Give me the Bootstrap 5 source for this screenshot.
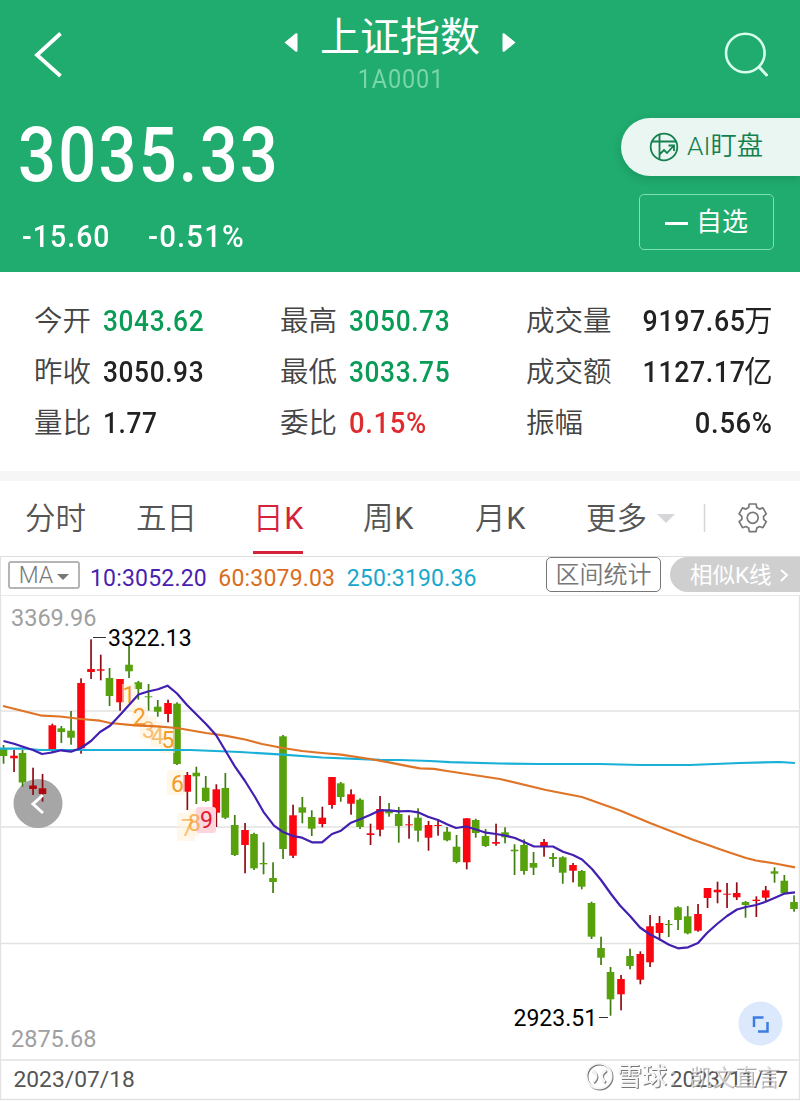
<!DOCTYPE html>
<html lang="zh-CN">
<head>
<meta charset="utf-8">
<meta name="viewport" content="width=device-width, initial-scale=1">
<title>上证指数</title>
<link rel="stylesheet" href="https://cdn.jsdelivr.net/npm/bootstrap@5.3.0/dist/css/bootstrap.min.css">
<style>
body{font-family:Roboto,"Noto Sans CJK SC",sans-serif;background:#fff;color:#222;width:800px;overflow-x:hidden}
.hd{background:#20ab6f;height:272px}
.hd-top{height:100px}
.hd-side{width:120px}
.title-cn{font-size:40px;line-height:48px;font-weight:400;padding-top:14px}
.title-cn svg{position:relative;top:4px}
.code{font-size:25px;line-height:28px;color:#79d6aa;letter-spacing:.9px;margin:4px 0 0 2px;transform:scaleX(.94)}
.price{font-size:76px;line-height:80px;font-weight:500;letter-spacing:2.5px;margin:15px 0 0 18px;transform:scaleX(.88);transform-origin:left}
.chg{font-size:31px;line-height:36px;font-weight:500;margin:24px 0 0 22px}
.chg span{letter-spacing:1.2px;transform:scaleX(.915);transform-origin:left}
.chg .pct{transform:scaleX(.95)}
.pill-ai{width:179px;height:58px;margin-top:18px;background:#e9f6f1;color:#15804f;border-radius:29px 0 0 29px;font-size:26.3px;font-weight:350;box-shadow:0 3px 8px rgba(0,80,40,.22);padding-left:28px}
.btn-fav{width:135px;height:56px;margin:18px 26px 0 0;border:1.5px solid #7fe0b4;border-radius:5px;font-size:26px;line-height:1}
.dash{width:23px;height:3px;background:#fff;margin-top:3px}
.stats{height:199px;padding:24px 28px 0 34px}
.stats .line{height:51px;line-height:51px;font-size:28.5px}
.cell{width:246px}
.lab{font-weight:350;color:#444}
.num{display:inline-block;font-size:29.5px;font-weight:500;letter-spacing:.7px;margin-left:11.500px;transform:scaleX(.89);transform-origin:left}
.wide{transform:scaleX(.93)}
.justify-content-between>.num{transform-origin:right;margin-right:-.5px}
.justify-content-between>.num:not(.wide){transform:scaleX(.905)}
.unit{display:inline-block;font-weight:400;letter-spacing:0;transform:scaleX(1.06);transform-origin:right}
.up{color:#e02b2e}.down{color:#089c56}
.gap-bar{height:10px;background:#f6f6f6}
.tabs{height:75px;font-size:30.5px;color:#555;font-weight:350;line-height:80px;white-space:nowrap}
.tabs>*{flex:none}
.tabs .k{font-weight:400;letter-spacing:.5px;margin-left:.7px}
.tabs .on{color:#d3243c;position:relative;width:50px}
.tabs .on::after{content:"";position:absolute;left:0;right:0;bottom:5px;height:3px;background:#d3243c}
.ma{height:39px;border-top:1px solid #dedede;border-left:1px solid #e2e2e2;font-size:23px;line-height:39px}
.ma>span{letter-spacing:.18px}
.ma-btn{width:72px;height:28px;border:2px solid #b5b5b5;border-radius:3px;color:#777;margin:4px 0 0 7px;font-size:23px;font-weight:350;line-height:26px}
.range{width:115px;height:35px;border:1.5px solid #777;border-radius:5px;color:#777;font-size:24px;font-weight:350;line-height:34px}
.sim{width:130px;height:35px;background:#cfcfcf;border-radius:18px 0 0 18px;color:#fff;font-size:22.5px;line-height:34px;margin:0 0 0 9px;padding-left:20px}
.chart{height:506px}
svg text{font-family:Roboto,"Noto Sans CJK SC",sans-serif}
</style>
</head>
<body>
<header class="hd text-white">
  <div class="hd-top d-flex justify-content-between">
    <div class="hd-side"><svg width="80" height="100" fill="none" stroke="#fff" stroke-width="3.800"><path d="M60.500 33.500L37 55L60.500 76"/></svg></div>
    <div class="text-center">
      <div class="title-cn d-flex align-items-center">
        <svg width="16" height="22" style="margin-right:21px"><path d="M1.500 11.500L12.500 2.500Q14.500 1.500 14.500 3.500V19.500Q14.500 21.500 12.500 20.500Z" fill="#fff"/></svg>
        <span>上证指数</span>
        <svg width="16" height="22" style="margin-left:21px"><path d="M14.500 11.500L3.500 2.500Q1.500 1.500 1.500 3.500V19.500Q1.500 21.500 3.500 20.500Z" fill="#fff"/></svg>
      </div>
      <div class="code">1A0001</div>
    </div>
    <div class="hd-side"><svg width="120" height="100" fill="none" stroke="#d8ffec" stroke-width="2.600" stroke-linecap="round"><circle cx="65.300" cy="53" r="19.300"/><path d="M80 68L86.500 75" stroke-width="3"/></svg></div>
  </div>
  <div class="d-flex justify-content-between">
    <div>
      <div class="price">3035.33</div>
      <div class="chg d-flex"><span style="width:126px">-15.60</span><span class="pct">-0.51%</span></div>
    </div>
    <div class="d-flex flex-column align-items-end">
      <div class="pill-ai d-flex align-items-center"><svg width="30" height="30" class="me-2" fill="none" stroke="#15804f" stroke-width="1.800"><circle cx="15" cy="15" r="13.300"/><path d="M10.500 2.500V27.500M2.500 9.500H27.500M10.500 22.500L15 18L18 21L24.500 14M19.500 13.500H25V19"/></svg><span>AI盯盘</span></div>
      <div class="btn-fav d-flex align-items-center justify-content-center"><span class="dash me-2"></span><span>自选</span></div>
    </div>
  </div>
</header>

<section class="stats">
  <div class="line d-flex"><div class="cell"><span class="lab">今开</span><span class="num down">3043.62</span></div><div class="cell"><span class="lab">最高</span><span class="num down">3050.73</span></div><div class="cell d-flex justify-content-between"><span class="lab">成交量</span><span class="num">9197.65<span class="unit">万</span></span></div></div>
  <div class="line d-flex"><div class="cell"><span class="lab">昨收</span><span class="num">3050.93</span></div><div class="cell"><span class="lab">最低</span><span class="num down">3033.75</span></div><div class="cell d-flex justify-content-between"><span class="lab">成交额</span><span class="num">1127.17<span class="unit">亿</span></span></div></div>
  <div class="line d-flex"><div class="cell"><span class="lab">量比</span><span class="num">1.77</span></div><div class="cell"><span class="lab">委比</span><span class="num wide up">0.15%</span></div><div class="cell d-flex justify-content-between"><span class="lab">振幅</span><span class="num wide">0.56%</span></div></div>
</section>
<div class="gap-bar"></div>

<nav class="tabs d-flex align-items-center">
  <span style="margin-left:25px;width:111px">分时</span>
  <span style="width:117px">五日</span>
  <span class="on">日<span class="k">K</span></span>
  <span style="margin-left:60px;width:112px">周<span class="k">K</span></span>
  <span style="width:111px">月<span class="k">K</span></span>
  <span style="width:62px">更多</span>
  <svg width="150" height="75"><path d="M9 33H27L18 42Z" fill="#d5d6d9"/><path d="M56.500 23V51" stroke="#d5d5d5" stroke-width="1.500"/><g fill="none" stroke="#777" stroke-width="1.700" stroke-linejoin="round"><path id="gearPath"/><circle cx="104.700" cy="36.800" r="5.500"/></g></svg>
</nav>

<div class="ma d-flex">
  <div class="ma-btn text-center">MA<svg width="12" height="8" class="ms-1"><path d="M0 1H12L6 7Z" fill="#777"/></svg></div>
  <span style="color:#4a1fae;margin:2px 11.500px 0 10px">10:3052.20</span>
  <span style="color:#d96d20;margin:2px 11.500px 0 0">60:3079.03</span>
  <span style="color:#18a8cc;margin-top:2px">250:3190.36</span>
  <div class="range text-center ms-auto">区间统计</div>
  <div class="sim d-flex align-items-center">相似K线<svg width="12" height="16" class="ms-2" fill="none" stroke="#fff" stroke-width="2"><path d="M1 3L7 8L1 14"/></svg></div>
</div>

<svg class="chart d-block" width="800" height="506" viewBox="0 595 800 506" id="chart">
  <path d="M0 595H799.500M.5 595V1099.500H799.500V595M0 711H799M0 827H799M0 943.500H799M0 1060H799" fill="none" stroke="#e2e2e2" stroke-width="1.300"/>
  <circle cx="38" cy="803.500" r="24.500" fill="#a6a6a6"/>
  <g id="candles"></g>
  <path d="M43 795L33 804L43 813" fill="none" stroke="#fff" stroke-width="3"/>
  <g font-size="23">
    <g fill="#fff0d8" fill-opacity=".55"><rect x="122" y="684" width="14" height="22"/><rect x="132" y="706" width="16" height="21"/><rect x="140" y="716" width="16" height="23"/><rect x="150" y="722" width="12" height="25"/><rect x="160" y="729" width="15" height="24"/><rect x="167" y="770" width="18" height="25"/><rect x="177" y="813" width="18" height="28"/><rect x="188" y="809" width="12" height="27"/></g>
    <rect x="196" y="807" width="20" height="26" rx="3" fill="#fcd6dc"/>
    <g fill="#f29b26"><text x="122.500" y="703">1</text><text x="133" y="725">2</text><text x="142" y="738" fill-opacity=".6">3</text><text x="151" y="744" fill-opacity=".6">4</text><text x="161.500" y="748">5</text><text x="171" y="792">6</text><text x="181" y="836" fill-opacity=".6">7</text><text x="188" y="831" fill-opacity=".7">8</text></g>
    <text x="200" y="828" fill="#e31b35">9</text>
  </g>
  <g fill="none" stroke-width="2.200" stroke-linejoin="round">
    <polyline stroke="#19b0d8" points="0,748.700 23,748.500 40,750 190,750 240,752 283,754.700 322,757.500 380,759.800 400,760 430,761 450,762.200 500,763.500 540,764 600,764 640,765 690,765 740,763 780,762 795,763"/>
    <polyline stroke="#df7427" points="3,706 42,715.700 60,716.500 81,719 100,720.700 110,723 135,725.300 157,726.300 177,728 206,733 225,735.700 245,739.500 262,744 283,748 302,751 322,753 341,754.700 370,759 389,762.300 409,766.300 420,768.300 434,768.800 447,771 500,779 546,790 582,797 620,810.500 650,823 693,839.700 708,845 722,850 737,855 746,858 756,860.500 775,863.500 795,867.300"/>
    <polyline stroke="#421fb0" points="3.500,741 14,743.700 23,746.700 33,750 42,754 52,752.500 61,750.300 71,751.700 81,748 91,741 100,732 110,725.700 120,715 129,705 138.500,694.500 148,691.500 158,689.300 167.500,685.700 177,693.500 187,705 196,714 206,724 216,735 225,750 235,766.700 245,781 255,797 264,812.700 274,825.700 283,832 293,836 302,837.700 312,842.300 322,842.300 332,834 341,830.700 351,822.700 360,819.300 370,815 380,810.300 389,810.300 399,811.300 409,811 418,812.300 428,816.700 438,820 447,824.300 456,828 466,826.500 476,829.500 486,832.700 496,834 505,835.500 515,838 524,842 534,846.500 553,846.500 563,851.700 573,855 582,859.500 592,869 601,880 611,894 620,905.500 630,916 640,927.500 650,934.500 659,939 669,944.700 678,948.300 688,947.300 698,943 707,933 717,924 727,916 737,909.500 746,907 756,905 765,902 775,897.700 784,893.700 795,892.300"/>
  </g>
  <path d="M93 637.500H106M599 1017.500H608" stroke="#333" stroke-width="1.200"/>
  <g font-size="23">
    <text x="108" y="646" fill="#000">3322.13</text><text x="513.500" y="1026" fill="#000">2923.51</text>
    <text x="11" y="626" fill="#a0a0a0" font-size="23.500">3369.96</text><text x="11" y="1047" fill="#a0a0a0" font-size="23.500">2875.68</text>
    <text x="13.500" y="1087" fill="#555" font-size="22.800">2023/07/18</text><text x="670" y="1087" fill="#555" font-size="22.200">2023/11/17</text>
  </g>
  <circle cx="760.500" cy="1023.500" r="22" fill="#dce8fb"/>
  <path d="M754 1027V1017.500H763.500M767.500 1022V1031.500H758" fill="none" stroke="#3d7de0" stroke-width="2.500"/>
  <g style="filter:drop-shadow(1px 1px .5px #777)">
    <circle cx="599" cy="1076" r="12.500" fill="none" stroke="#f7f7f7" stroke-width="2"/>
    <path d="M592 1070Q600 1076 593 1082M606 1070Q598 1076 605 1082" stroke="#f7f7f7" stroke-width="2.400" fill="none"/>
    <text x="617" y="1085" font-size="25" fill="#f7f7f7" font-weight="500">雪球</text>
    <text x="667" y="1085" font-size="22.500" fill="#f7f7f7" fill-opacity=".65">：凯文直言</text>
  </g>
</svg>

<script>
// Each candle: centre x, direction (g falls, r rises), body top, body bottom, high, low
const candles=[
[3.5,'g',748.7,756,745,763.7],[14,'r',755.7,758.3,750,772],[22.5,'g',753,782.5,750,786.7],[33,'r',785.5,789,767.7,795],[42.5,'r',788.3,794,774,801.7],[52.3,'r',725.3,749.3,723.7,753],[61.3,'g',728.3,732,726,743],[71,'g',730.7,737.7,711,744.7],[81,'r',683,748.3,678.3,753.7],[91,'r',669,672,639.3,679],[100.7,'r',669.3,670.7,654.7,680.3],[109.5,'g',678,696,668,706],[120,'r',679,702.3,679,710.7],[129,'g',664.7,671.3,645.7,678],[138.3,'g',682.3,689,681,699.7],[148.5,'g',696.3,697.3,684,710.7],[157.7,'g',706.7,711.7,700,716.7],[168,'r',703,714,699.7,722.3],[177,'g',703.7,764,702.3,765],[187.3,'r',775,791.7,772,810],[196.3,'g',772.7,776.3,766.7,804],[205.7,'g',787.7,801,776,802],[216.3,'r',789.3,812.7,784.3,827],[225.3,'g',788,817.7,773,819],[234.7,'g',825,855,815,856],[245,'r',830,845,823,873.3],[254,'g',834,868.3,832.7,870],[263.5,'g',863,864.3,842.3,874.3],[273,'g',878,882,862.3,893],[283,'g',736.3,849,735,859],[293,'r',815.3,855.7,804.7,858],[302.3,'g',807.3,812.7,797,823.3],[311.7,'g',817,828.7,810.3,836],[322.3,'r',817.7,824,806.7,827.3],[332,'r',777,805,777,808.7],[340.7,'g',783.3,797,782,801.7],[351,'r',794.3,803.7,789.3,814.7],[360,'g',799.7,827,798.3,829],[370.5,'r',833.3,835,823.7,845],[380,'r',809,829.7,796,836.3],[389,'g',810,813.3,803,816.7],[398.7,'g',814,826,807,842.7],[409,'r',824.3,825,815.3,838.7],[418,'g',817.7,830.7,808.3,841.7],[428.5,'r',825,837.7,821,850.7],[438,'r',825,826,819.3,835.7],[447,'g',831.7,840.3,827,841.3],[456.5,'g',846.7,862,835,863.3],[466.7,'r',818.3,862.3,818,869.3],[475.7,'g',820,833,818.7,837.7],[485.5,'g',836,846,829,847],[496,'r',842,843.7,823.7,845.7],[505,'g',832.3,837.3,827.3,843.3],[514.5,'g',849.7,851.3,844.3,875],[524,'g',845,871,839.3,874.7],[533.5,'g',863,867.7,852,875],[544,'r',842,847,839,856.7],[553,'g',857,859,853,867],[562.7,'g',857.3,872.7,856.3,883.7],[573,'r',865,870.7,863,882.3],[581.7,'g',871,886.7,870,889.3],[591.5,'g',903,936.7,901.7,939],[601,'g',948,957.7,936.7,965],[610.5,'g',972,999.3,967,1015.7],[621,'r',979,994.3,975,1010.3],[630,'g',956,966,948.7,969.3],[640.3,'r',954,979.7,951.3,984.3],[650,'r',926.3,962.3,915,967],[659.5,'r',923,933,916,940.3],[668.7,'g',924,924.7,920,937],[678,'g',907.3,920,906.3,930],[687.7,'g',916.3,933.3,906,934.3],[698,'r',914,930.7,904,931.7],[707.5,'r',888,898,888,908],[717.5,'r',889.7,892.3,881.7,903.3],[727,'r',893.7,894.3,883,908],[736.7,'r',893,897.3,882.3,900],[745.5,'g',902,905,901,917.7],[756.3,'r',899.7,901,896.3,917],[765.7,'r',890.3,897.7,886,901.7],[774.5,'g',871.3,873.7,867.3,882.7],[784.3,'g',880.7,893.3,875,894.3],[794,'g',902,909,895.3,911.7]];
document.getElementById('candles').innerHTML=candles.map(([x,d,t,b,h,l])=>{
  const wick=d==='g'?'#3f7d10':'#8f0d16',body=d==='g'?'#57a10d':(x>30&&x<45?'#b0060c':'#fb0510');
  return `<rect x="${x-.8}" y="${h}" width="1.700" height="${l-h}" fill="${wick}"/><rect x="${x-3.8}" y="${t}" width="7.600" height="${Math.max(b-t,1)}" fill="${body}"/>`;
}).join('');
// Six-toothed gear outline
const cx=104.7,cy=36.8,pts=[];
for(let i=0;i<6;i++){const a=i*60-90;
  [[-22,11],[-14,14.2],[14,14.2],[22,11]].forEach(([o,r])=>{const q=(a+o)*Math.PI/180;pts.push((cx+r*Math.cos(q)).toFixed(1)+' '+(cy+r*Math.sin(q)).toFixed(1));});}
document.getElementById('gearPath').setAttribute('d','M'+pts.join('L')+'Z');
</script>
<script src="https://cdn.jsdelivr.net/npm/bootstrap@5.3.0/dist/js/bootstrap.bundle.min.js"></script>
</body>
</html>
